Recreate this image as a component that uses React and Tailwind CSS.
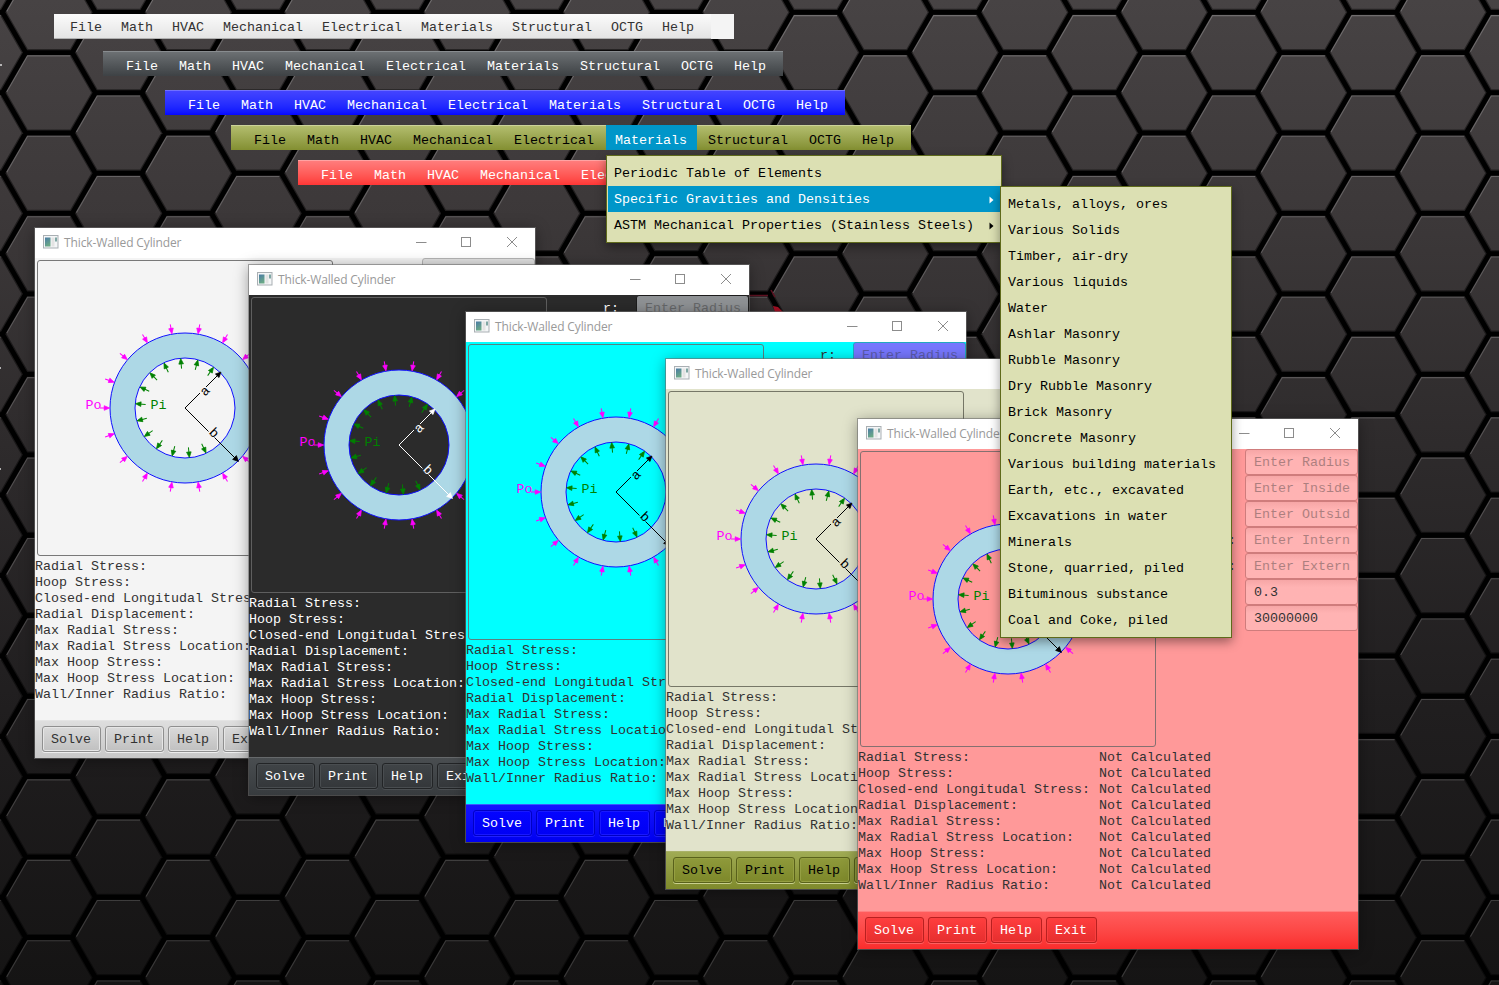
import React from 'react';

const MENUS = ['File', 'Math', 'HVAC', 'Mechanical', 'Electrical', 'Materials', 'Structural', 'OCTG', 'Help'];

const RESULTS = [
  'Radial Stress:',
  'Hoop Stress:',
  'Closed-end Longitudal Stress:',
  'Radial Displacement:',
  'Max Radial Stress:',
  'Max Radial Stress Location:',
  'Max Hoop Stress:',
  'Max Hoop Stress Location:',
  'Wall/Inner Radius Ratio:',
];

const FIELDS = [
  { label: 'r:', hint: 'Enter Radius' },
  { label: 'a:', hint: 'Enter Inside' },
  { label: 'b:', hint: 'Enter Outsid' },
  { label: 'Pin:', hint: 'Enter Intern' },
  { label: 'Pex:', hint: 'Enter Extern' },
  { label: 'v:', value: '0.3' },
  { label: 'E:', value: '30000000' },
];

const SUBMENU = [
  'Metals, alloys, ores', 'Various Solids', 'Timber, air-dry', 'Various liquids', 'Water',
  'Ashlar Masonry', 'Rubble Masonry', 'Dry Rubble Masonry', 'Brick Masonry', 'Concrete Masonry',
  'Various building materials', 'Earth, etc., excavated', 'Excavations in water', 'Minerals',
  'Stone, quarried, piled', 'Bituminous substance', 'Coal and Coke, piled',
];

const BARS = [
  { cls: 'left-[103px] top-[51px] bg-linear-to-b from-[#6c7073] to-[#3e4245] border-t border-[#888c8f] text-white' },
  { cls: 'left-[165px] top-[90px] bg-linear-to-b from-[#4444ff] to-[#0606ff] border-t border-[#7070ff] text-white' },
  { cls: 'left-[231px] top-[125px] bg-linear-to-b from-[#b3bd6d] to-[#838f31] border-t border-[#ccd39a] text-black', open: 'Materials' },
  { cls: 'left-[298px] top-[160px] bg-linear-to-b from-[#ff7c7c] to-[#ff3636] border-t border-[#ffa3a3] text-white' },
];

const WINDOWS = [
  {
    pos: 'left-[35px] top-[228px]', body: 'bg-[#f4f4f4]', text: 'text-[#323232]', line: '#000000', hole: 'text-[#f4f4f4]',
    field: 'bg-[#e2e2e2] border-[#b5b5b5]', canvas: 'border-[#787878]',
    bar: 'bg-linear-to-b from-[#dedede] to-[#c8c8c8] border-[#e4e4e4]',
    btn: 'from-[#dadada] to-[#c0c0c0] border-[#8f8f8f] text-[#323232] shadow-[inset_0_0_0_1px_#e6e6e6,0_1px_0_#ededed]',
  },
  {
    pos: 'left-[249px] top-[265px]', body: 'bg-[#2b2b2b]', text: 'text-white', line: '#ffffff', hole: 'text-[#2b2b2b]',
    field: 'bg-[#8f9295] border-[#1c1c1c] text-[#2b2b2b]', canvas: 'border-[#5f5f5f]',
    bar: 'bg-linear-to-b from-[#4a4e51] to-[#373b3e] border-[#66696b]',
    btn: 'from-[#404447] to-[#34373a] border-[#222426] text-white shadow-[inset_0_0_0_1px_#494d50,0_1px_0_#4b4f52]',
  },
  {
    pos: 'left-[466px] top-[312px]', body: 'bg-[#00ffff]', text: 'text-[#323232]', line: '#000000', hole: 'text-[#00ffff]',
    field: 'bg-[#7777ff] border-[#22a8c0]', canvas: 'border-[#5c8080]',
    bar: 'bg-linear-to-b from-[#1414ff] to-[#0000f0] border-[#3a5cff]',
    btn: 'from-[#0404ff] to-[#0000f4] border-[#0000c4] text-white shadow-[inset_0_0_0_1px_#1818ff,0_1px_0_#2020ff]',
  },
  {
    pos: 'left-[666px] top-[359px]', body: 'bg-[#e1e3cb]', text: 'text-[#323232]', line: '#000000', hole: 'text-[#e1e3cb]',
    field: 'bg-[#d9deb0] border-[#a0a585]', canvas: 'border-[#767767]',
    bar: 'bg-linear-to-b from-[#a0ab54] to-[#7f8a2b] border-[#a9b168]',
    btn: 'from-[#8f9a3b] to-[#7d882a] border-[#59611b] text-black shadow-[inset_0_0_0_1px_#959f42,0_1px_0_#c9d08e]',
  },
  {
    pos: 'left-[858px] top-[419px]', body: 'bg-[#ff9999]', text: 'text-[#323232]', line: '#000000', hole: 'text-[#ff9999]',
    field: 'bg-linear-to-b from-[#f6a6a6] via-[#ffb3b3] via-30% to-[#ffb3b3] border-[#cf7c7c]', canvas: 'border-[#857070]',
    bar: 'bg-linear-to-b from-[#ff5c5c] to-[#fa2c2c] border-[#ff8080]',
    btn: 'from-[#ff3e3e] to-[#e62e2e] border-[#b82020] text-white shadow-[inset_0_0_0_1px_#fb4040,0_1px_0_#ff6060]',
  },
];

const OUTER = Array.from({ length: 18 }, (_, i) => i * 20);
const INNER = Array.from({ length: 13 }, (_, i) => 55 + i * 20);

// Top-left corner of every hexagon's upper edge; odd columns sit half a cell higher.
const CELLS = Array.from({ length: 24 }, (_, c) =>
  Array.from({ length: 15 }, (_, r) => [
    25.7 + (c - 1) * 69.7,
    12.3 + (r - 1) * 80.45 - (c % 2 ? 40.22 : 0),
  ])
).flat();
const OUTLINES = CELLS.map(([x, y]) => `M${x} ${y}h46.5l23.2 40.2l-23.2 40.25h-46.5l-23.2 -40.25Z`).join('');
const GLINTS = CELLS.map(([x, y]) => `M${x - 19} ${y + 39.4}L${x + 1.9} ${y + 3.3}H${x + 44.6}`).join('');

function Wallpaper() {
  return (
    <svg className="absolute inset-0" width="1499" height="985">
      <defs>
        <linearGradient id="base" gradientUnits="userSpaceOnUse" x1="0" y1="0" x2="0" y2="985">
          <stop offset="0" stopColor="#474344" />
          <stop offset="0.22" stopColor="#3c3839" />
          <stop offset="0.45" stopColor="#2e2b2c" />
          <stop offset="0.72" stopColor="#201e1f" />
          <stop offset="1" stopColor="#151414" />
        </linearGradient>
        <linearGradient id="shine" gradientUnits="userSpaceOnUse" x1="0" y1="0" x2="0" y2="985">
          <stop offset="0" stopColor="#716e6f" />
          <stop offset="0.45" stopColor="#555253" />
          <stop offset="1" stopColor="#383737" />
        </linearGradient>
      </defs>
      <rect width="1499" height="985" fill="url(#base)" />
      <path d={OUTLINES} fill="none" stroke="#000" strokeOpacity="0.45" strokeWidth="7.2" />
      <path d={OUTLINES} fill="none" stroke="#000" strokeWidth="4.8" />
      <path d={GLINTS} fill="none" stroke="url(#shine)" strokeWidth="1.1" />
      <path d="M749 295.5H768M771 290L775 297" fill="none" stroke="#5e1020" strokeWidth="1.5" />
      <path d="M773 306L778 307L783 312H775Z" fill="#a80f24" />
      <path d="M0 65h2M0 368h1M0 469h1" stroke="#ddd" strokeWidth="1.5" />
    </svg>
  );
}

function Diagram({ line }) {
  return (
    <svg className="block" width="294" height="294" viewBox="1 1 294 294">
      <circle cx="148" cy="148" r="75" fill="#add8e6" stroke="#1010ff" />
      <circle cx="148" cy="148" r="50" className="fill-current" stroke="#1010ff" />
      {OUTER.map((a) => (
        <g key={a} transform={`translate(148 148) rotate(${-a})`} stroke="#ff00ff" fill="#ff00ff">
          <path d="M85 0H79" />
          <path d="M75.3 0L80.8 -2.3V2.3Z" strokeWidth="0.7" />
        </g>
      ))}
      {INNER.map((a) => (
        <g key={a} transform={`translate(148 148) rotate(${-a})`} stroke="#008000" fill="#008000">
          <path d="M39.5 0H46" />
          <path d="M49.7 0L44.2 -2.3V2.3Z" strokeWidth="0.7" />
        </g>
      ))}
      <g stroke={line} fill={line}>
        <path d="M163 133L148 148L171.5 171.5M169 127L183 113M177.5 177.5L200 200" fill="none" />
        <path d="M184 112L182 117.6L178.4 114ZM201.5 201.5L195.6 199.4L199.4 195.6Z" strokeWidth="0.7" />
      </g>
      <g className="font-['Liberation_Mono',monospace] text-[13.33px]">
        <text x="48.5" y="149" fill="#ff00ff">Po</text>
        <text x="113.5" y="149" fill="#008000">Pi</text>
        <text transform="translate(168 131) rotate(-45)" x="-4" y="4" fill={line}>a</text>
        <text transform="translate(177 173) rotate(45)" x="-4" y="4" fill={line}>b</text>
      </g>
    </svg>
  );
}

function AppIcon() {
  return (
    <svg className="mb-[2px]" width="16" height="14" viewBox="0 0 16 14">
      <defs>
        <linearGradient id="pane" x1="0" y1="0" x2="0.4" y2="1">
          <stop offset="0" stopColor="#4a7ba6" />
          <stop offset="1" stopColor="#6aa886" />
        </linearGradient>
      </defs>
      <rect x="0.5" y="0.5" width="14.5" height="12.5" fill="#f4f6f7" stroke="#a9afb3" />
      <rect x="2" y="2.5" width="5.5" height="9" fill="url(#pane)" />
      <rect x="8.5" y="2.5" width="3" height="9" fill="#e3e3e3" />
      <rect x="12" y="2.5" width="2" height="4" fill="#7fa7a4" />
    </svg>
  );
}

function TitleBar() {
  return (
    <div className="flex h-[30px] items-center bg-white pl-2 pr-[17px] text-[#999]">
      <AppIcon />
      <span className="ml-[5px] whitespace-nowrap font-['Open_Sans','Noto_Sans',sans-serif] text-[12px] leading-4 tracking-[-0.12px]">
        Thick-Walled Cylinder
      </span>
      <svg className="mb-[2px] ml-auto" width="104" height="12" viewBox="0 0 104 12" fill="none" stroke="#8c8c8c">
        <path d="M2 6.5H12.5" />
        <rect x="47.5" y="1.5" width="9" height="9" />
        <path d="M93 1L103 11M103 1L93 11" />
      </svg>
    </div>
  );
}

function CylinderWindow({ theme }) {
  return (
    <section className={`absolute h-[530px] w-[500px] shadow-[0_0_0_1px_rgba(110,110,110,0.6),0_2px_14px_rgba(0,0,0,0.4)] ${theme.pos}`}>
      <div className={`flex h-full flex-col overflow-hidden ${theme.body} ${theme.text}`}>
        <TitleBar />
        <div className="flex h-[301px]">
          <div className={`ml-[2px] mt-[2px] size-[296px] shrink-0 rounded-[3px] border ${theme.canvas} ${theme.hole}`}>
            <Diagram line={theme.line} />
          </div>
          <div className="ml-[39px] grid w-[163px] auto-rows-[26px] grid-cols-[50px_113px]">
            {FIELDS.map((f) => (
              <React.Fragment key={f.label}>
                <span className="flex items-center justify-center pt-[2px] leading-4">{f.label}</span>
                <span className={`flex h-[26px] items-center overflow-hidden whitespace-nowrap rounded-[3px] border pl-2 pt-[2px] ${theme.field}`}>
                  {f.value ? f.value : <span className="opacity-40">{f.hint}</span>}
                </span>
              </React.Fragment>
            ))}
          </div>
        </div>
        <div className="grid w-[360px] grid-cols-[241px_1fr] whitespace-nowrap leading-4">
          {RESULTS.map((r) => (
            <React.Fragment key={r}>
              <span>{r}</span>
              <span>Not Calculated</span>
            </React.Fragment>
          ))}
        </div>
        <div className={`mt-auto flex h-[38px] gap-1 border-t pl-[7px] pt-[5px] ${theme.bar}`}>
          {['Solve', 'Print', 'Help', 'Exit'].map((b) => (
            <button key={b} className={`h-[26px] rounded-[3px] border bg-linear-to-b pl-2 pr-[9px] pt-[2px] ${theme.btn}`}>{b}</button>
          ))}
        </div>
      </div>
    </section>
  );
}

function MenuBar({ cls, open }) {
  return (
    <nav className={`absolute flex h-[25px] w-[680px] pl-[15px] ${cls}`}>
      {MENUS.map((m) => (
        <span
          key={m}
          className={m === open ? '-mt-px -ml-px mr-[3px] flex h-[25px] w-[91px] items-center bg-[#0096c9] pl-[9px] pt-[7px] leading-4 text-white' : 'flex h-6 items-center pl-2 pr-[13px] pt-[6px] leading-4'}
        >
          {m}
        </span>
      ))}
    </nav>
  );
}

function Arrow() {
  return (
    <svg width="5" height="8" viewBox="0 0 5 8"><path d="M0.5 0.5L4.5 4L0.5 7.5Z" fill="currentColor" /></svg>
  );
}

export default function App() {
  return (
    <main className="relative h-[985px] w-[1499px] overflow-hidden font-['Liberation_Mono',monospace] text-[13.33px]">
      <Wallpaper />
      <nav className="absolute left-[54px] top-[14px] flex h-[25px] w-[680px] bg-[#f4f4f4] text-[#323232]">
        <div className="flex w-[657px] items-center gap-[19px] border-b border-[#b0b0b0] bg-linear-to-b from-[#fbfbfb] to-[#e4e4e4] pl-4 pt-[3px] leading-4">
          {MENUS.map((m) => <span key={m}>{m}</span>)}
        </div>
      </nav>
      {BARS.map((b) => <MenuBar key={b.cls} {...b} />)}
      {WINDOWS.map((w) => <CylinderWindow key={w.pos} theme={w} />)}
      <div className="absolute left-[606px] top-[155px] h-[88px] w-[396px] border border-[#5f6a1b] bg-[#dce0b3] px-px pt-[4px] text-black shadow-[0_4px_10px_rgba(0,0,0,0.4)]">
        <div className="flex h-[26px] items-center pl-[6px] pt-[2px]">Periodic Table of Elements</div>
        <div className="flex h-[26px] items-center justify-between bg-[#0096c9] pl-[6px] pr-[6px] pt-[2px] text-white">Specific Gravities and Densities<Arrow /></div>
        <div className="flex h-[26px] items-center justify-between pl-[6px] pr-[6px] pt-[2px]">ASTM Mechanical Properties (Stainless Steels)<Arrow /></div>
      </div>
      <div className="absolute left-[1000px] top-[186px] h-[452px] w-[232px] border border-[#5f6a1b] bg-[#dce0b3] pl-[7px] pt-[5px] text-black shadow-[0_4px_10px_rgba(0,0,0,0.4)]">
        {SUBMENU.map((s) => <div key={s} className="flex h-[26px] items-center whitespace-nowrap">{s}</div>)}
      </div>
    </main>
  );
}
